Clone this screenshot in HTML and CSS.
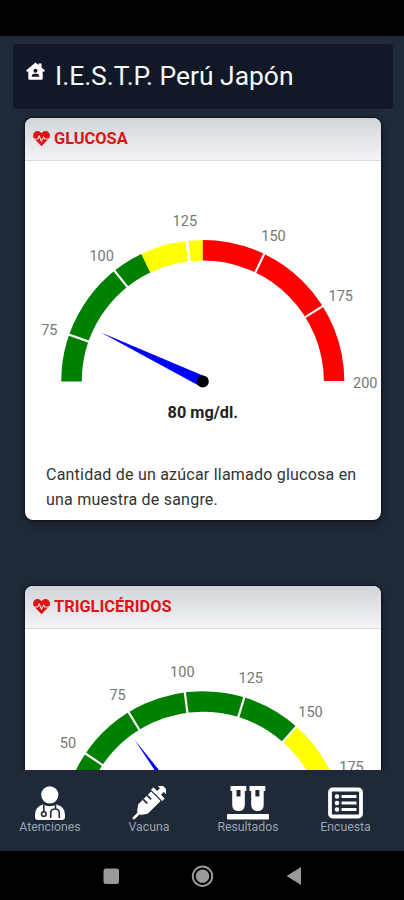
FILE: index.html
```
<!DOCTYPE html>
<html lang="es">
<head>
<meta charset="utf-8">
<meta name="viewport" content="width=device-width, initial-scale=1">
<title>I.E.S.T.P. Perú Japón</title>
<link rel="stylesheet" href="styles.css">
</head>
<body>
<svg width="0" height="0" class="defs" aria-hidden="true">
  <symbol id="heartbeat" viewBox="0 0 512 512">
    <path d="M320.200 243.800l-49.700 99.400c-6 12.100-23.400 11.700-28.900-.6l-56.900-126.300-30 71.700H60.600l182.500 186.500c7.100 7.300 18.600 7.300 25.700 0L451.400 288H342.300l-22.100-44.200zM473.700 73.900l-2.400-2.500c-51.500-52.600-135.800-52.600-187.400 0L256 100l-27.900-28.500c-51.500-52.700-135.900-52.700-187.400 0l-2.400 2.400C-10.400 123.700-12.500 203 31 256h102.400l35.900-86.200c5.400-12.900 23.600-13.200 29.400-.4l58.200 129.300 49-97.900c5.900-11.800 22.700-11.800 28.600 0l27.600 55.200H481c43.500-53 41.400-132.300-7.300-182.100z"/>
  </symbol>
</svg>
<div class="phone">
  <div class="statusbar"></div>
  <header class="topbar">
    <svg class="home" viewBox="0 0 19 18">
      <path fill="#fff" d="M9.500 .5 12.500 3V1.500h3V5.400L19 8.600 17.700 10 16.700 9.200V16.500Q16.700 17.700 15.500 17.700H3.500Q2.300 17.700 2.300 16.500V9.200L1.300 10 0 8.600Z"/>
      <circle cx="9.500" cy="8.700" r="2" fill="#111827"/>
      <path fill="#111827" d="M5.700 14.700Q5.900 11.700 8 11.700H11Q13.100 11.700 13.300 14.700Z"/>
    </svg>
    <h1>I.E.S.T.P. Perú Japón</h1>
  </header>
  <main>
    <section class="card">
      <h2><svg class="heart"><use href="#heartbeat"/></svg>GLUCOSA</h2>
      <svg class="gauge" viewBox="0 0 356 290">
        <g transform="translate(177.800 220.500)">
          <g class="arc">
            <path class="green" d="M-131.300 0A131.300 131.300 0 0 1-56.940-118.310"/>
            <path class="yellow" d="M-56.940-118.310A131.300 131.300 0 0 1 0-131.300"/>
            <path class="red" d="M0-131.300A131.300 131.300 0 0 1 131.300-.5"/>
          </g>
          <g class="ticks">
            <path d="M-143 0H-120" transform="rotate(19.290)"/>
            <path d="M-143 0H-120" transform="rotate(51.430)"/>
            <path class="wide" d="M-143 0H-120" transform="rotate(83.570)"/>
            <path d="M-143 0H-120" transform="rotate(115.710)"/>
            <path d="M-143 0H-120" transform="rotate(147.860)"/>
          </g>
          <path class="needle" d="M-113 0 0-5.500V5.500Z" transform="rotate(25.710)"/>
          <circle r="6"/>
          <g class="labels">
            <text x="-153.500" y="-47">75</text>
            <text x="-101.200" y="-120.500">100</text>
            <text x="-18" y="-155.500">125</text>
            <text x="70.700" y="-140.500">150</text>
            <text x="138" y="-80.500">175</text>
            <text x="162.500" y="6">200</text>
          </g>
          <text class="value" x="0" y="36">80 mg/dl.</text>
        </g>
      </svg>
      <p>Cantidad de un azúcar llamado glucosa en una muestra de sangre.</p>
    </section>
    <section class="card">
      <h2><svg class="heart"><use href="#heartbeat"/></svg>TRIGLICÉRIDOS</h2>
      <svg class="gauge" viewBox="0 0 356 290">
        <g transform="translate(177.800 203.800)">
          <g class="arc">
            <path class="green" d="M-131.300 0A131.300 131.300 0 0 1 86.740-98.570"/>
            <path class="yellow" d="M86.740-98.570A131.300 131.300 0 0 1 131.300 0"/>
          </g>
          <g class="ticks">
            <path d="M-143 0H-120" transform="rotate(34.050)"/>
            <path d="M-143 0H-120" transform="rotate(58.380)"/>
            <path d="M-143 0H-120" transform="rotate(82.700)"/>
            <path d="M-143 0H-120" transform="rotate(107.030)"/>
            <path d="M-143 0H-120" transform="rotate(131.350)"/>
          </g>
          <path class="needle" d="M-115 0 0-5.500V5.500Z" transform="rotate(53.700)"/>
          <circle r="6"/>
          <g class="labels">
            <text x="-134.800" y="-85">50</text>
            <text x="-85.200" y="-132.500">75</text>
            <text x="-20.500" y="-155.500">100</text>
            <text x="48" y="-149.500">125</text>
            <text x="107.700" y="-115.500">150</text>
            <text x="148.700" y="-60.800">175</text>
          </g>
        </g>
      </svg>
    </section>
  </main>
  <nav>
    <a class="atenciones">
      <svg viewBox="0 0 30 34">
        <circle cx="14.800" cy="8.800" r="8.600" fill="#fff"/>
        <path fill="#fff" d="M8 18.500Q14.800 22 21.600 18.500Q30 20.500 30 29V31Q30 34 27 34H3Q0 34 0 31V29Q0 20.500 8 18.500Z"/>
        <g fill="none" stroke="#1f2937" stroke-width="1.600">
          <path d="M8.800 19V25.500M20.500 19V22.500M16.500 31.300H15.700V27Q15.700 23 20 23T24.300 27V31.300H23.500"/>
          <circle cx="8.800" cy="28" r="2.300"/>
        </g>
      </svg>
      <span>Atenciones</span>
    </a>
    <a class="vacuna">
      <svg viewBox="0 0 34 34">
        <g transform="translate(17 17) rotate(45)" fill="#fff">
          <path d="M-5.700-22H5.700V-18.200H2.700V-14.200H8V-10.800H-8V-14.200H-2.700V-18.200H-5.700Z"/>
          <path d="M-6.700-9.700H6.700V8.500L2.500 14.500H1.300V22.500H-1.300V14.500H-2.500L-6.700 8.500Z"/>
          <path d="M-6.700-4H-1M-6.700 1.500H-1" stroke="#1f2937" stroke-width="1.700"/>
        </g>
      </svg>
      <span>Vacuna</span>
    </a>
    <a class="resultados">
      <svg viewBox="0 0 42 34">
        <path fill="#fff" fill-rule="evenodd" d="M3.500 0H19.300V5H17.800V19Q17.500 25 11.500 25T5.200 19V5H3.500ZM9.500 4V10.500H13.500V4ZM22.500 0H38.300V5H36.700V19Q36.500 25 30.500 25T24.200 19V5H22.500ZM28.400 4V10.500H32.400V4Z"/>
        <rect x="0" y="28" width="42" height="5.600" rx="1" fill="#fff"/>
      </svg>
      <span>Resultados</span>
    </a>
    <a class="encuesta">
      <svg viewBox="0 0 35 34">
        <rect x="2" y="3.500" width="31" height="27" rx="2.500" fill="none" stroke="#fff" stroke-width="3.800"/>
        <path stroke="#fff" stroke-width="2.800" d="M13.500 10.500H28.500M13.500 17H28.500M13.500 23.500H28.500"/>
        <g fill="#fff"><circle cx="9" cy="10.500" r="2.300"/><circle cx="9" cy="17" r="2.300"/><circle cx="9" cy="23.500" r="2.300"/></g>
      </svg>
      <span>Encuesta</span>
    </a>
  </nav>
  <footer>
    <svg viewBox="0 0 404 49">
      <rect x="103.500" y="17.500" width="15.500" height="15.500" rx="2.500"/>
      <circle cx="202.500" cy="25.200" r="6.700"/>
      <circle cx="202.500" cy="25.200" r="9.700" fill="none" stroke="#999" stroke-width="2"/>
      <path d="M286.500 25 301 16V34Z"/>
    </svg>
  </footer>
</div>
</body>
</html>
```
FILE: styles.css
```
* { box-sizing: border-box; }

body {
  margin: 0;
  background: #000;
  font-family: Roboto, "Liberation Sans", sans-serif;
}

.defs { position: absolute; }

.phone {
  display: flex;
  flex-direction: column;
  width: 404px;
  height: 900px;
  overflow: hidden;
  background: #1f2937;
}

.statusbar {
  flex: none;
  height: 36px;
  background: #000;
}

.topbar {
  flex: none;
  display: flex;
  height: 65px;
  margin: 8px 11px 0 13px;
  padding: 18px 0 0 13px;
  border-radius: 4px;
  background: #111827;
}

.home {
  width: 19px;
  height: 18px;
  margin: 0 10px 0 0;
}

h1 {
  margin: 0;
  color: #f8f8f8;
  font-size: 26.4px;
  font-weight: 400;
  line-height: 28px;
  white-space: nowrap;
}

main {
  flex: none;
  height: 660.5px;
  padding: 9px 23px 0 25px;
  overflow: hidden;
}

.card {
  height: 402px;
  margin-bottom: 66px;
  overflow: hidden;
  border-radius: 8px;
  background: #fff;
  box-shadow: 0 0 2px 1px #0b111e, 0 5px 10px #0003;
}

h2 {
  display: flex;
  align-items: center;
  height: 43px;
  margin: 0;
  padding: 0 0 2px 8px;
  border-bottom: 1px solid #d9dadd;
  background: linear-gradient(#d1d5db, #f3f4f6);
  color: #dc1414;
  font-size: 16.4px;
  font-weight: 700;
}

.heart {
  width: 17px;
  height: 17px;
  margin-right: 4px;
  fill: #dc1414;
}

.gauge {
  display: block;
  width: 356px;
  height: 290px;
}

.arc { fill: none; stroke-width: 20.5px; }
.green { stroke: #008000; }
.yellow { stroke: #ff0; }
.red { stroke: #f00; }
.ticks { stroke: #fff; stroke-width: 2.2px; }
.ticks .wide { stroke-width: 3px; }
.needle { fill: #00f; }

.labels {
  fill: #777;
  font-size: 14.5px;
  text-anchor: middle;
}

.value {
  fill: #222;
  font-size: 16.3px;
  font-weight: 700;
  text-anchor: middle;
}

p {
  margin: 12px 18px 0 21px;
  color: #333;
  font-size: 16px;
  line-height: 24.5px;
  letter-spacing: 0.22px;
}

nav {
  flex: none;
  display: grid;
  grid-template-columns: 99px 99px 99px 96px;
  height: 81.5px;
  padding: 16px 0 0 0.5px;
}

nav a {
  display: flex;
  flex-direction: column;
  align-items: center;
  color: #9ca3af;
  font-size: 12.3px;
  line-height: 15px;
}

nav svg { height: 34px; }

footer {
  flex: none;
  height: 49px;
  background: #000;
}

footer svg {
  display: block;
  width: 404px;
  height: 49px;
  fill: #999;
}
```
